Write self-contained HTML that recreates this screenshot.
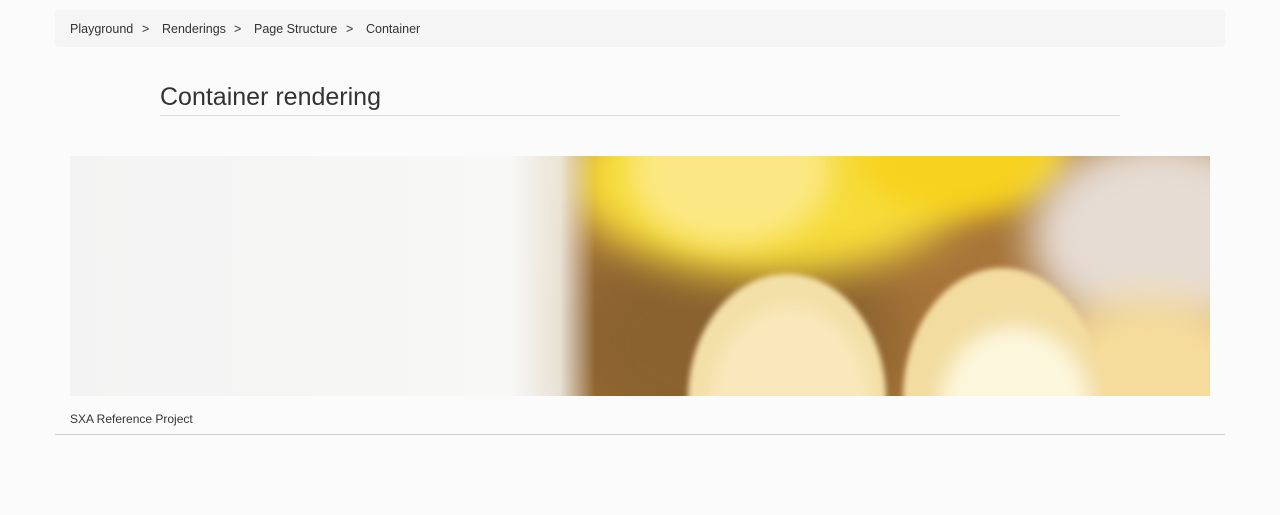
<!DOCTYPE html>
<html><head><style>
body{margin:0;width:1280px;height:515px;overflow:hidden;background:#fbfbfb;font-family:"Liberation Sans",sans-serif;position:relative}
.bc{position:absolute;left:55px;top:10px;width:1170px;height:37px;background:#f5f5f5;border-radius:4px;font-size:12.5px;color:#333}
.bc span{position:absolute;top:12px}
h1{position:absolute;left:160px;top:83px;margin:0;font-weight:normal;font-size:25px;color:#333;width:960px;border-bottom:1px solid #ddd;height:32px}
.img{position:absolute;left:70px;top:156px;width:1140px;height:240px;overflow:hidden;background:#a8753a}
.b{position:absolute;filter:blur(14px);border-radius:50%}
.foot{position:absolute;left:70px;top:412px;font-size:12px;color:#333}
.line{position:absolute;left:55px;top:434px;width:1170px;height:1px;background:#ccc}
</style></head><body>
<div class="bc"><span style="left:15px">Playground</span><span style="left:87px">&gt;</span><span style="left:107px">Renderings</span><span style="left:179px">&gt;</span><span style="left:199px">Page Structure</span><span style="left:291px">&gt;</span><span style="left:311px">Container</span></div>
<h1>Container rendering</h1>
<div class="img">
 <div class="b" style="left:480px;top:60px;width:350px;height:250px;background:#8a6230;filter:blur(30px)"></div>
 <div class="b" style="left:500px;top:-80px;width:400px;height:200px;background:#f7dc3a;filter:blur(20px)"></div>
 <div class="b" style="left:560px;top:-60px;width:200px;height:150px;background:#fbe884"></div>
 <div class="b" style="left:790px;top:-60px;width:210px;height:120px;background:#f7d21e"></div>
 <div class="b" style="left:960px;top:-20px;width:260px;height:200px;background:#e6dcd4;filter:blur(20px)"></div>
 <div class="b" style="left:960px;top:140px;width:240px;height:160px;background:#f6dc9c;filter:blur(20px)"></div>
 <div class="b" style="left:618px;top:118px;width:198px;height:250px;background:#f3e0a8;filter:blur(3px);border-radius:50% 50% 40% 40%"></div>
 <div class="b" style="left:640px;top:150px;width:160px;height:200px;background:#f8e8bb;filter:blur(8px)"></div>
 <div class="b" style="left:833px;top:112px;width:198px;height:260px;background:#f2dca0;filter:blur(3px);border-radius:50% 50% 40% 40%"></div>
 <div class="b" style="left:870px;top:170px;width:150px;height:160px;background:#fcf6dc;filter:blur(10px)"></div>
 <div style="position:absolute;left:0;top:0;width:560px;height:240px;background:linear-gradient(90deg,#f3f3f3 0,#f6f6f5 300px,#f8f8f6 440px,rgba(245,245,240,.85) 490px,rgba(240,238,228,0) 525px)"></div>
</div>
<div class="foot">SXA Reference Project</div>
<div class="line"></div>
</body></html>
